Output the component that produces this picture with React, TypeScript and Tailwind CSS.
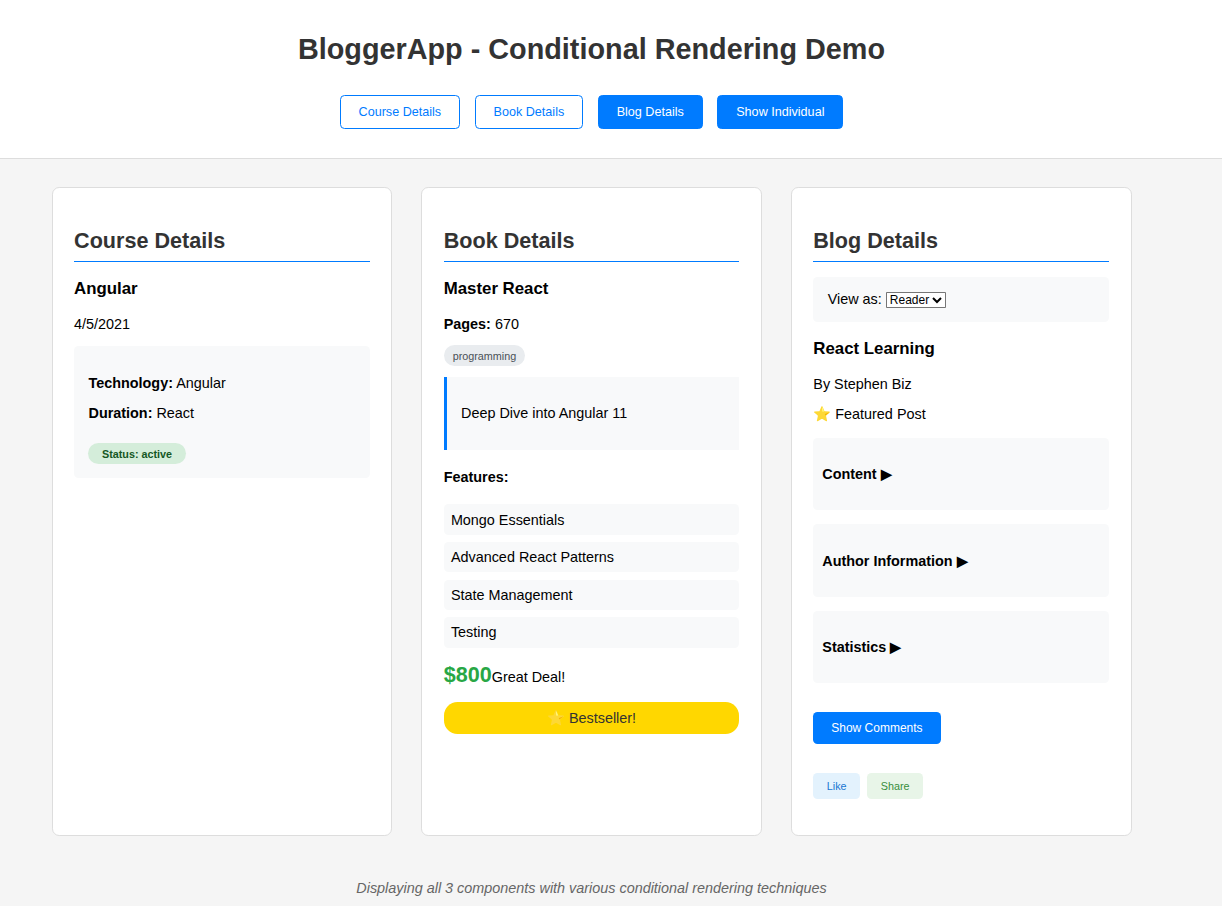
import React, { useState } from "react";

const tabs = [
  { label: "Course Details", filled: false },
  { label: "Book Details", filled: false },
  { label: "Blog Details", filled: true },
  { label: "Show Individual", filled: true },
];

const features = ["Mongo Essentials", "Advanced React Patterns", "State Management", "Testing"];

const sections = ["Content", "Author Information", "Statistics"];

function Card({ title, children }: { title: string; children: React.ReactNode }) {
  return (
    <section className="rounded-lg border border-[#ddd] bg-white p-6">
      <h2 className="mt-[19.92px] mb-4 border-b-2 border-[#007bff] pb-2 text-[24px] leading-[normal] font-bold text-[#333]">
        {title}
      </h2>
      {children}
    </section>
  );
}

function Title({ children }: { children: React.ReactNode }) {
  return <h3 className="my-[18.72px] text-[18.72px] leading-[normal] font-bold">{children}</h3>;
}

function CourseDetails() {
  return (
    <Card title="Course Details">
      <Title>Angular</Title>
      <p className="my-4">4/5/2021</p>
      <div className="flow-root rounded-[5px] bg-[#f8f9fa] p-4">
        <p className="my-4">
          <strong>Technology:</strong> Angular
        </p>
        <p className="my-4">
          <strong>Duration:</strong> React
        </p>
        <div className="mt-6 flex">
          <span className="rounded-[15px] bg-[#d4edda] px-[15px] pt-[5.4px] pb-[4.6px] text-[12px] leading-[normal] font-bold text-[#155724]">
            Status: active
          </span>
        </div>
      </div>
    </Card>
  );
}

function BookDetails() {
  return (
    <Card title="Book Details">
      <Title>Master React</Title>
      <p className="mt-4 mb-[15px]">
        <strong>Pages:</strong> 670
      </p>
      <div className="flex">
        <span className="rounded-xl bg-[#e9ecef] px-[10px] py-[5px] text-[12px] leading-[normal] text-[#495057]">
          programming
        </span>
      </div>
      <div className="mt-[11.5px] flow-root border-l-4 border-[#007bff] bg-[#f8f9fa] p-4">
        <p className="my-4">Deep Dive into Angular 11</p>
      </div>
      <h4 className="my-[21.28px] font-bold">Features:</h4>
      <ul className="flex flex-col gap-2">
        {features.map((f) => (
          <li key={f} className="rounded-[5px] bg-[#f8f9fa] p-2">
            {f}
          </li>
        ))}
      </ul>
      <div className="mt-4">
        <span className="text-[24px] leading-[normal] font-bold text-[#28a745]">$800</span>
        <span>Great Deal!</span>
      </div>
      <div className="mt-4 rounded-[15px] bg-[#ffd700] px-2 pt-[8.3px] pb-[7.7px] text-center text-[#333]">
        ⭐ Bestseller!
      </div>
    </Card>
  );
}

function BlogDetails() {
  const [role, setRole] = useState("Reader");
  return (
    <Card title="Blog Details">
      <div className="mt-[16.3px] rounded-[5px] bg-[#f8f9fa] px-4 pt-[15.7px] pb-4">
        <label>
          View as:{" "}
          <select
            value={role}
            onChange={(e) => setRole(e.target.value)}
            className="rounded-[1px] border border-[#767676] bg-white text-[13.333px] leading-[normal]"
          >
            <option>Reader</option>
            <option>Editor</option>
            <option>Admin</option>
          </select>
        </label>
      </div>
      <Title>React Learning</Title>
      <p className="my-4">By Stephen Biz</p>
      <p className="my-4">⭐ Featured Post</p>
      {sections.map((s) => (
        <div key={s} className="my-4 flow-root rounded-[5px] bg-[#f8f9fa] p-[10px]">
          <h4 className="my-[21.28px] cursor-pointer font-bold">{s} ▶</h4>
        </div>
      ))}
      <div className="mt-8 flex">
        <button className="rounded-[5px] bg-[#007bff] px-5 py-[10px] text-[13.333px] leading-[normal] text-white">
          Show Comments
        </button>
      </div>
      <div className="mt-8 mb-4 flex gap-2">
        <button className="rounded-[5px] bg-[#e3f2fd] px-[15px] py-2 text-[12px] leading-[normal] text-[#1976d2]">
          Like
        </button>
        <button className="rounded-[5px] bg-[#e8f5e8] px-[15px] py-2 text-[12px] leading-[normal] text-[#388e3c]">
          Share
        </button>
      </div>
    </Card>
  );
}

export default function App() {
  return (
    <div className="min-h-screen bg-[#f5f5f5]">
      <div className="font-['Liberation_Sans',Arial,sans-serif] text-[16px] leading-[normal] text-black [zoom:0.9]">
        <header className="flow-root border-b border-[#ddd] bg-white pt-4 pb-8">
          <div className="w-[1314.45px]">
            <h1 className="mt-[20.67px] mb-8 text-center text-[32px] leading-[normal] font-bold text-[#333]">
              BloggerApp - Conditional Rendering Demo
            </h1>
            <nav className="flex justify-center gap-4">
              {tabs.map((t) => (
                <button
                  key={t.label}
                  className={
                    t.filled
                      ? "rounded-[5px] border border-[#007bff] bg-[#007bff] px-5 py-[10px] text-[14px] leading-[normal] text-white"
                      : "rounded-[5px] border border-[#007bff] bg-white px-5 py-[10px] text-[14px] leading-[normal] text-[#007bff]"
                  }
                >
                  {t.label}
                </button>
              ))}
            </nav>
          </div>
        </header>
        <main className="w-[1314.45px] pt-8">
          <div className="mx-auto grid w-[1200px] grid-cols-3 gap-8">
            <CourseDetails />
            <BookDetails />
            <BlogDetails />
          </div>
          <p className="mt-[48.5px] text-center text-[#666] italic">
            Displaying all 3 components with various conditional rendering techniques
          </p>
        </main>
      </div>
    </div>
  );
}
